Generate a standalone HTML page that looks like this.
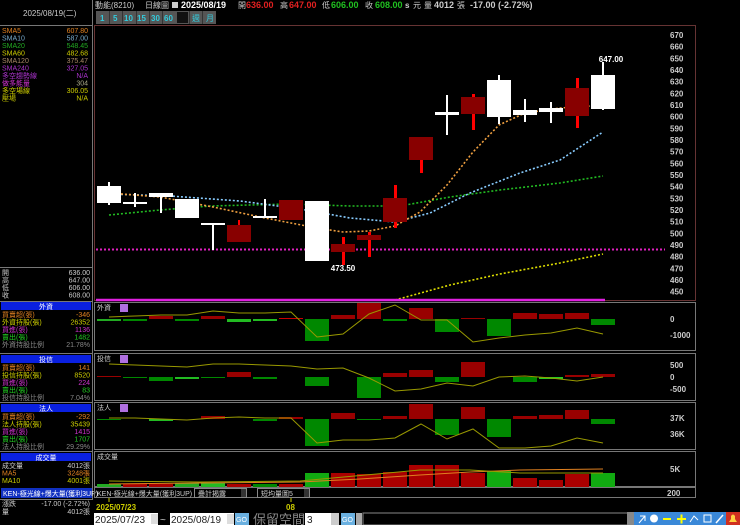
<html><head><style>body{margin:0;background:#000;width:740px;height:525px;overflow:hidden}svg{display:block}text{font-family:"Liberation Sans","Noto Sans CJK TC",sans-serif}</style></head><body>
<svg width="740" height="525" viewBox="0 0 740 525" xmlns="http://www.w3.org/2000/svg">
<rect width="740" height="525" fill="#000"/>
<!-- left panel borders -->
<g stroke="#777" fill="none" stroke-width="1">
<line x1="92.5" y1="0" x2="92.5" y2="500"/>
<line x1="0" y1="25.5" x2="92" y2="25.5"/>
<line x1="0" y1="267.5" x2="92" y2="267.5"/>
<line x1="0" y1="301.5" x2="92" y2="301.5"/>
<line x1="0" y1="353.5" x2="92" y2="353.5"/>
<line x1="0" y1="402.5" x2="92" y2="402.5"/>
<line x1="0" y1="451.5" x2="92" y2="451.5"/>
<line x1="0" y1="499.5" x2="92" y2="499.5"/>
</g>
<text x="23" y="16" font-size="8" fill="#ccc">2025/08/19(二)</text>
<g font-size="7" font-family="Liberation Serif,serif">
<text x="2" y="33" fill="#e08020">SMA5</text><text x="88" y="33" fill="#e08020" text-anchor="end">607.80</text>
<text x="2" y="40.5" fill="#7ac">SMA10</text><text x="88" y="40.5" fill="#7ac" text-anchor="end">587.00</text>
<text x="2" y="48" fill="#2a2">SMA20</text><text x="88" y="48" fill="#2a2" text-anchor="end">548.45</text>
<text x="2" y="55.5" fill="#cc0">SMA60</text><text x="88" y="55.5" fill="#cc0" text-anchor="end">482.68</text>
<text x="2" y="63" fill="#a86">SMA120</text><text x="88" y="63" fill="#a86" text-anchor="end">375.47</text>
<text x="2" y="70.5" fill="#a3c">SMA240</text><text x="88" y="70.5" fill="#a3c" text-anchor="end">327.05</text>
<text x="2" y="78" fill="#a3c">多空趨勢線</text><text x="88" y="78" fill="#a3c" text-anchor="end">N/A</text>
<text x="2" y="85.5" fill="#c3c">做多能量</text><text x="88" y="85.5" fill="#aa8" text-anchor="end">304</text>
<text x="2" y="93" fill="#cc0">多空場線</text><text x="88" y="93" fill="#cc0" text-anchor="end">306.05</text>
<text x="2" y="100.5" fill="#cc0">壓場</text><text x="88" y="100.5" fill="#cc0" text-anchor="end">N/A</text>
<text x="2" y="275" fill="#ccc">開</text><text x="90" y="275" fill="#ccc" text-anchor="end">636.00</text>
<text x="2" y="282.5" fill="#ccc">高</text><text x="90" y="282.5" fill="#ccc" text-anchor="end">647.00</text>
<text x="2" y="290" fill="#ccc">低</text><text x="90" y="290" fill="#ccc" text-anchor="end">606.00</text>
<text x="2" y="297.5" fill="#ccc">收</text><text x="90" y="297.5" fill="#ccc" text-anchor="end">608.00</text>
<rect x="1" y="302" width="90" height="8" fill="#0a20e0"/><text x="46" y="309" fill="#fff" text-anchor="middle">外資</text>
<text x="2" y="317" fill="#e08020">買賣超(張)</text><text x="90" y="317" fill="#e08020" text-anchor="end">-346</text>
<text x="2" y="324.5" fill="#cc0">外資持股(張)</text><text x="90" y="324.5" fill="#cc0" text-anchor="end">26352</text>
<text x="2" y="332" fill="#c3c">買進(張)</text><text x="90" y="332" fill="#c3c" text-anchor="end">1136</text>
<text x="2" y="339.5" fill="#2c2">賣出(張)</text><text x="90" y="339.5" fill="#2c2" text-anchor="end">1482</text>
<text x="2" y="347" fill="#888">外資持股比例</text><text x="90" y="347" fill="#888" text-anchor="end">21.78%</text>
<rect x="1" y="355" width="90" height="8" fill="#0a20e0"/><text x="46" y="362" fill="#fff" text-anchor="middle">投信</text>
<text x="2" y="370" fill="#e08020">買賣超(張)</text><text x="90" y="370" fill="#e08020" text-anchor="end">141</text>
<text x="2" y="377.5" fill="#cc0">投信持股(張)</text><text x="90" y="377.5" fill="#cc0" text-anchor="end">8520</text>
<text x="2" y="385" fill="#c3c">買進(張)</text><text x="90" y="385" fill="#c3c" text-anchor="end">224</text>
<text x="2" y="392.5" fill="#2c2">賣出(張)</text><text x="90" y="392.5" fill="#2c2" text-anchor="end">83</text>
<text x="2" y="400" fill="#888">投信持股比例</text><text x="90" y="400" fill="#888" text-anchor="end">7.04%</text>
<rect x="1" y="404" width="90" height="8" fill="#0a20e0"/><text x="46" y="411" fill="#fff" text-anchor="middle">法人</text>
<text x="2" y="419" fill="#e08020">買賣超(張)</text><text x="90" y="419" fill="#e08020" text-anchor="end">-292</text>
<text x="2" y="426.5" fill="#cc0">法人持股(張)</text><text x="90" y="426.5" fill="#cc0" text-anchor="end">35439</text>
<text x="2" y="434" fill="#c3c">買進(張)</text><text x="90" y="434" fill="#c3c" text-anchor="end">1415</text>
<text x="2" y="441.5" fill="#2c2">賣出(張)</text><text x="90" y="441.5" fill="#2c2" text-anchor="end">1707</text>
<text x="2" y="449" fill="#888">法人持股比例</text><text x="90" y="449" fill="#888" text-anchor="end">29.29%</text>
<rect x="1" y="453" width="90" height="8" fill="#0a20e0"/><text x="46" y="460" fill="#fff" text-anchor="middle">成交量</text>
<text x="2" y="468" fill="#ccc">成交量</text><text x="90" y="468" fill="#ccc" text-anchor="end">4012張</text>
<text x="2" y="475.5" fill="#e08020">MA5</text><text x="90" y="475.5" fill="#e08020" text-anchor="end">3248張</text>
<text x="2" y="483" fill="#cc0">MA10</text><text x="90" y="483" fill="#cc0" text-anchor="end">4001張</text>
<rect x="1" y="488" width="91" height="10" fill="#1030c0"/><text x="3" y="496" fill="#fff">KEN-極光線+爆大量(獲利3UP)</text>
<text x="2" y="506" fill="#ccc">漲跌</text><text x="90" y="506" fill="#ccc" text-anchor="end">-17.00 (-2.72%)</text>
<text x="2" y="514" fill="#ccc">量</text><text x="90" y="514" fill="#ccc" text-anchor="end">4012張</text>
</g>
<!-- header -->
<g font-size="8">
<text x="95" y="8" fill="#ccc">動能(8210)</text>
<text x="145" y="8" fill="#ccc">日線圖</text>
<rect x="172" y="2" width="6" height="6" fill="#ccc"/>
<text x="181" y="8" fill="#fff" font-weight="bold" font-size="9">2025/08/19</text>
<text x="238" y="8" fill="#ccc">開</text><text x="246" y="8" fill="#e02020" font-weight="bold" font-size="9">636.00</text>
<text x="280" y="8" fill="#ccc">高</text><text x="289" y="8" fill="#e02020" font-weight="bold" font-size="9">647.00</text>
<text x="322" y="8" fill="#ccc">低</text><text x="331" y="8" fill="#20c020" font-weight="bold" font-size="9">606.00</text>
<text x="365" y="8" fill="#ccc">收</text><text x="375" y="8" fill="#20c020" font-weight="bold" font-size="9">608.00</text>
<text x="405" y="8" fill="#ccc" font-weight="bold">s</text><text x="413" y="8" fill="#ccc">元</text>
<text x="424" y="8" fill="#ccc">量</text><text x="434" y="8" fill="#ccc" font-weight="bold" font-size="9">4012</text><text x="457" y="8" fill="#ccc">張</text>
<text x="470" y="8" fill="#ccc" font-weight="bold" font-size="9">-17.00 (-2.72%)</text>
</g>
<g font-size="8" fill="#3cd" font-weight="bold">
<rect x="96" y="11" width="120" height="13" fill="#555"/>
<rect x="177" y="12" width="11" height="11" fill="#111"/>
<g stroke="#333"><line x1="109.5" y1="11" x2="109.5" y2="24"/><line x1="122.5" y1="11" x2="122.5" y2="24"/><line x1="136.5" y1="11" x2="136.5" y2="24"/><line x1="149.5" y1="11" x2="149.5" y2="24"/><line x1="162.5" y1="11" x2="162.5" y2="24"/><line x1="189.5" y1="11" x2="189.5" y2="24"/><line x1="202.5" y1="11" x2="202.5" y2="24"/></g>
<text x="100" y="21">1</text><text x="113" y="21">5</text><text x="124" y="21">10</text><text x="137" y="21">15</text><text x="151" y="21">30</text><text x="164" y="21">60</text><text x="192" y="21" font-weight="normal">週</text><text x="206" y="21" font-weight="normal">月</text>
</g>
<!-- frames -->
<g fill="none" stroke-width="1">
<rect x="94.5" y="25.5" width="601" height="275" stroke="#633"/>
<rect x="94.5" y="302.5" width="601" height="48" stroke="#777"/>
<rect x="94.5" y="353.5" width="601" height="47" stroke="#777"/>
<rect x="94.5" y="402.5" width="601" height="47" stroke="#777"/>
<rect x="94.5" y="451.5" width="601" height="35" stroke="#777"/>
<rect x="94.5" y="487.5" width="601" height="10" stroke="#777"/>
</g>
<!-- price axis -->
<g font-size="8" fill="#ccc" font-weight="bold">
<text x="670" y="38">670</text><text x="670" y="49.7">660</text><text x="670" y="61.3">650</text><text x="670" y="73">640</text><text x="670" y="84.7">630</text><text x="670" y="96.3">620</text><text x="670" y="108">610</text><text x="670" y="119.7">600</text><text x="670" y="131.3">590</text><text x="670" y="143">580</text><text x="670" y="154.7">570</text><text x="670" y="166.3">560</text><text x="670" y="178">550</text><text x="670" y="189.7">540</text><text x="670" y="201.3">530</text><text x="670" y="213">520</text><text x="670" y="224.7">510</text><text x="670" y="236.3">500</text><text x="670" y="248">490</text><text x="670" y="259.7">480</text><text x="670" y="271.3">470</text><text x="670" y="283">460</text><text x="670" y="294.7">450</text>
<text x="670" y="322">0</text><text x="670" y="338">-1000</text>
<text x="670" y="368">500</text><text x="670" y="380">0</text><text x="670" y="392">-500</text>
<text x="670" y="421">37K</text><text x="670" y="437">36K</text>
<text x="670" y="472">5K</text><text x="667" y="496">200</text>
</g>
<!-- MA lines -->
<g fill="none" stroke-width="1.6" stroke-dasharray="2 2">
<polyline stroke="#dd0" points="395,300 450,285 500,274 560,263 603,254"/>
<polyline stroke="#2b2" points="109,215 160,210 210,206 290,204 350,206 400,206 450,197 500,190 560,183 603,176"/>
<polyline stroke="#8cf" points="109,194 170,196 240,201 300,209 350,218 395,222 430,213 470,193 520,173 560,160 603,132"/>
<polyline stroke="#f0a040" points="109,193 160,197 213,207 265,218 317,228 343,232 369,231 395,226 420,212 447,185 473,152 499,125 525,113 560,108 590,106 603,107"/>
</g>
<line x1="96" y1="249.5" x2="665" y2="249.5" stroke="#e020c0" stroke-width="2" stroke-dasharray="2 2"/>
<line x1="96" y1="300" x2="605" y2="300" stroke="#e020e0" stroke-width="2.5"/>
<!-- candles -->
<g>
<g fill="#fff">
<rect x="108" y="182" width="2" height="23"/><rect x="97" y="186" width="24" height="17"/>
<rect x="134" y="193" width="2" height="14"/><rect x="123" y="202" width="24" height="2"/>
<rect x="160" y="193" width="2" height="20"/><rect x="149" y="193" width="24" height="4"/>
<rect x="175" y="199" width="24" height="19"/>
<rect x="212" y="224" width="2" height="26"/><rect x="201" y="223" width="24" height="2"/>
<rect x="264" y="199" width="2" height="18"/><rect x="253" y="216" width="24" height="2"/>
<rect x="305" y="201" width="24" height="60"/>
<rect x="446" y="95" width="2" height="40"/><rect x="435" y="112" width="24" height="3"/>
<rect x="498" y="75" width="2" height="49"/><rect x="487" y="80" width="24" height="37"/>
<rect x="524" y="99" width="2" height="23"/><rect x="513" y="110" width="24" height="5"/>
<rect x="550" y="102" width="2" height="21"/><rect x="539" y="108" width="24" height="4"/>
<rect x="602" y="62" width="2" height="48"/><rect x="591" y="75" width="24" height="34"/>
</g>
<g fill="#f00">
<rect x="238" y="220" width="2" height="6"/>
<rect x="342" y="237" width="3" height="28"/><rect x="368" y="232" width="3" height="25"/>
<rect x="394" y="185" width="3" height="43"/><rect x="420" y="160" width="3" height="13"/>
<rect x="472" y="94" width="3" height="36"/><rect x="576" y="78" width="3" height="50"/>
</g>
<g fill="#800">
<rect x="227" y="225" width="24" height="17"/><rect x="279" y="200" width="24" height="20"/>
<rect x="331" y="244" width="24" height="8"/><rect x="357" y="235" width="24" height="5"/>
<rect x="383" y="198" width="24" height="24"/><rect x="409" y="137" width="24" height="23"/>
<rect x="461" y="97" width="24" height="17"/><rect x="565" y="88" width="24" height="28"/>
</g>
<text x="611" y="62" font-size="8" fill="#fff" font-weight="bold" text-anchor="middle">647.00</text>
<text x="343" y="271" font-size="8" fill="#fff" font-weight="bold" text-anchor="middle">473.50</text>
</g>
<!-- sub panel labels -->
<g font-size="7" fill="#ccc">
<text x="97" y="310">外資</text><rect x="120" y="304" width="8" height="8" fill="#b070e0"/>
<text x="97" y="361">投信</text><rect x="120" y="355" width="8" height="8" fill="#b070e0"/>
<text x="97" y="410">法人</text><rect x="120" y="404" width="8" height="8" fill="#b070e0"/>
<text x="97" y="459">成交量</text>
</g>
<!-- 外資 bars -->
<g fill="#080">
<rect x="97" y="319" width="24" height="2" fill="#2a2"/><rect x="123" y="319" width="24" height="2"/><rect x="175" y="319" width="24" height="2"/><rect x="227" y="319" width="24" height="3" fill="#2b2"/><rect x="253" y="319" width="24" height="2" fill="#2b2"/>
<rect x="305" y="319" width="24" height="22"/><rect x="383" y="319" width="24" height="2"/><rect x="435" y="319" width="24" height="13"/><rect x="487" y="319" width="24" height="17"/><rect x="591" y="319" width="24" height="6"/>
</g>
<g fill="#900">
<rect x="149" y="316" width="24" height="3"/><rect x="201" y="316" width="24" height="3"/><rect x="279" y="318" width="24" height="1" fill="#c00"/>
<rect x="331" y="315" width="24" height="4"/><rect x="357" y="303" width="24" height="16"/><rect x="409" y="308" width="24" height="11"/><rect x="461" y="318" width="24" height="1"/>
<rect x="513" y="313" width="24" height="6"/><rect x="539" y="314" width="24" height="5"/><rect x="565" y="313" width="24" height="6"/>
</g>
<polyline fill="none" stroke="#990" stroke-width="1" points="109,317 135,316 161,315 187,315 213,311 239,313 265,313 291,312 317,337 343,334 369,314 395,305 421,320 447,320 473,342 499,338 525,335 551,333 577,328 603,334"/>
<!-- 投信 bars -->
<g fill="#080">
<rect x="123" y="377" width="24" height="1"/><rect x="149" y="377" width="24" height="4"/><rect x="175" y="377" width="24" height="2" fill="#2b2"/><rect x="201" y="377" width="24" height="1"/><rect x="253" y="377" width="24" height="2"/>
<rect x="305" y="377" width="24" height="9"/><rect x="357" y="377" width="24" height="21"/><rect x="435" y="377" width="24" height="5"/><rect x="513" y="377" width="24" height="5"/><rect x="539" y="377" width="24" height="2" fill="#2c2"/>
</g>
<g fill="#900">
<rect x="97" y="376" width="24" height="1"/><rect x="227" y="372" width="24" height="5"/><rect x="383" y="373" width="24" height="4"/><rect x="409" y="370" width="24" height="7"/><rect x="461" y="362" width="24" height="15"/><rect x="565" y="375" width="24" height="2"/><rect x="591" y="374" width="24" height="3"/>
</g>
<polyline fill="none" stroke="#990" stroke-width="1" points="109,364 135,365 161,366 187,367 213,364 239,364 265,365 291,366 317,369 343,368 369,378 395,391 421,389 447,383 473,386 499,377 525,376 551,378 577,381 603,377"/>
<!-- 法人 bars -->
<g fill="#080">
<rect x="97" y="419" width="24" height="1"/><rect x="149" y="419" width="24" height="2" fill="#2b2"/><rect x="253" y="419" width="24" height="2"/>
<rect x="305" y="419" width="24" height="27"/><rect x="357" y="419" width="24" height="1"/><rect x="435" y="419" width="24" height="16"/><rect x="487" y="419" width="24" height="18"/><rect x="591" y="419" width="24" height="5"/>
</g>
<g fill="#900">
<rect x="201" y="416" width="24" height="3"/><rect x="279" y="417" width="24" height="2"/><rect x="331" y="413" width="24" height="6"/><rect x="383" y="416" width="24" height="3"/><rect x="409" y="404" width="24" height="15"/><rect x="461" y="407" width="24" height="12"/>
<rect x="513" y="416" width="24" height="3"/><rect x="539" y="415" width="24" height="4"/><rect x="565" y="410" width="24" height="9"/>
</g>
<polyline fill="none" stroke="#990" stroke-width="1" points="109,418 135,418 161,419 187,420 213,418 239,417 265,418 291,418 317,443 343,440 369,440 395,438 421,424 447,439 473,429 499,448 525,448 551,446 577,438 603,443"/>
<!-- volume bars -->
<g fill="#080">
<rect x="97" y="484" width="24" height="3" fill="#2a2"/><rect x="175" y="483" width="24" height="4" fill="#2a2"/><rect x="201" y="483" width="24" height="4" fill="#2b2"/><rect x="253" y="484" width="24" height="3"/>
<rect x="305" y="473" width="24" height="14" fill="#1a1"/><rect x="487" y="471" width="24" height="16" fill="#1a1"/><rect x="591" y="473" width="24" height="14" fill="#1a1"/>
</g>
<g fill="#a00">
<rect x="123" y="484" width="24" height="3"/><rect x="149" y="484" width="24" height="3"/><rect x="227" y="484" width="24" height="3"/><rect x="279" y="484" width="24" height="3"/>
<rect x="331" y="473" width="24" height="14"/><rect x="357" y="474" width="24" height="13"/><rect x="383" y="472" width="24" height="15"/><rect x="409" y="465" width="24" height="22"/><rect x="435" y="465" width="24" height="22"/><rect x="461" y="473" width="24" height="14"/>
<rect x="513" y="478" width="24" height="9"/><rect x="539" y="480" width="24" height="7"/><rect x="565" y="474" width="24" height="13"/>
</g>
<polyline fill="none" stroke="#e08020" stroke-width="1" points="109,484 200,483 300,482 360,479 420,475 470,472 520,470 603,469"/>
<polyline fill="none" stroke="#990" stroke-width="1" points="109,481 200,482 300,481 420,470 470,470 520,473 603,473"/>
<!-- bottom row -->
<g font-size="7" font-family="Liberation Serif,serif">
<text x="97" y="496" fill="#ccc">KEN-極光線+爆大量(獲利3UP)</text>
<rect x="194.5" y="488.5" width="52" height="9" fill="#000" stroke="#888"/><text x="198" y="496" fill="#ccc">疊計揭露</text><rect x="241" y="489" width="5" height="8" fill="#333"/>
<rect x="257.5" y="488.5" width="52" height="9" fill="#000" stroke="#888"/><text x="261" y="496" fill="#ccc">短均量圖5</text><rect x="304" y="489" width="5" height="8" fill="#333"/>
</g>
<line x1="109" y1="498" x2="109" y2="502" stroke="#cc0"/><line x1="291" y1="498" x2="291" y2="502" stroke="#cc0"/>
<text x="96" y="510" font-size="8" fill="#cc0" font-weight="bold">2025/07/23</text>
<text x="286" y="510" font-size="8" fill="#cc0" font-weight="bold">08</text>
<g font-size="10" font-family="Liberation Serif,serif">
<rect x="94" y="513" width="64" height="12" fill="#fff"/><text x="95" y="523" fill="#222">2025/07/23</text><rect x="151" y="514" width="7" height="10" fill="#ddd"/>
<text x="160" y="523" fill="#ccc">~</text>
<rect x="170" y="513" width="64" height="12" fill="#fff"/><text x="171" y="523" fill="#222">2025/08/19</text><rect x="227" y="514" width="7" height="10" fill="#ddd"/>
<rect x="235" y="513" width="14" height="12" fill="#6ab0e0"/><text x="236" y="522" font-size="7" fill="#fff">GO</text>
<text x="253" y="524" font-size="13" fill="#888">保留空間</text>
<rect x="305" y="513" width="26" height="12" fill="#fff"/><text x="307" y="523" fill="#222">3</text><rect x="331" y="513" width="8" height="12" fill="#ccc"/>
<rect x="341" y="513" width="14" height="12" fill="#6ab0e0"/><text x="342" y="522" font-size="7" fill="#fff">GO</text>
<rect x="356" y="513" width="6" height="12" fill="#aaa"/>
<rect x="363" y="513" width="269" height="12" fill="#000" stroke="#888"/>
</g>
<rect x="627" y="512" width="7" height="13" fill="#888"/>
<rect x="634" y="512" width="92" height="13" fill="#3a88d8"/>
<g fill="#fff" stroke="#fff">
<path d="M639 523 L645 516 M640 516 L645 516 L645 521" fill="none" stroke-width="1"/>
<circle cx="654" cy="518.5" r="4" stroke="none"/>
<rect x="663" y="518" width="8" height="2" fill="#ff0" stroke="none"/>
<rect x="677" y="518" width="9" height="2" fill="#ff0" stroke="none"/><rect x="680.5" y="514.5" width="2" height="9" fill="#ff0" stroke="none"/>
<path d="M690 522 L694 516 L698 520" fill="none"/>
<rect x="704" y="515" width="7" height="7" fill="none"/>
<path d="M716 523 L723 515" fill="none" stroke-width="1.5"/>
</g>
<rect x="726" y="512" width="14" height="13" fill="#d03020"/>
<path d="M729 522 L737 522 L735 519 L735 516 Q733 513 731 516 L731 519 Z" fill="#ffd040"/>
</svg>
</body></html>
